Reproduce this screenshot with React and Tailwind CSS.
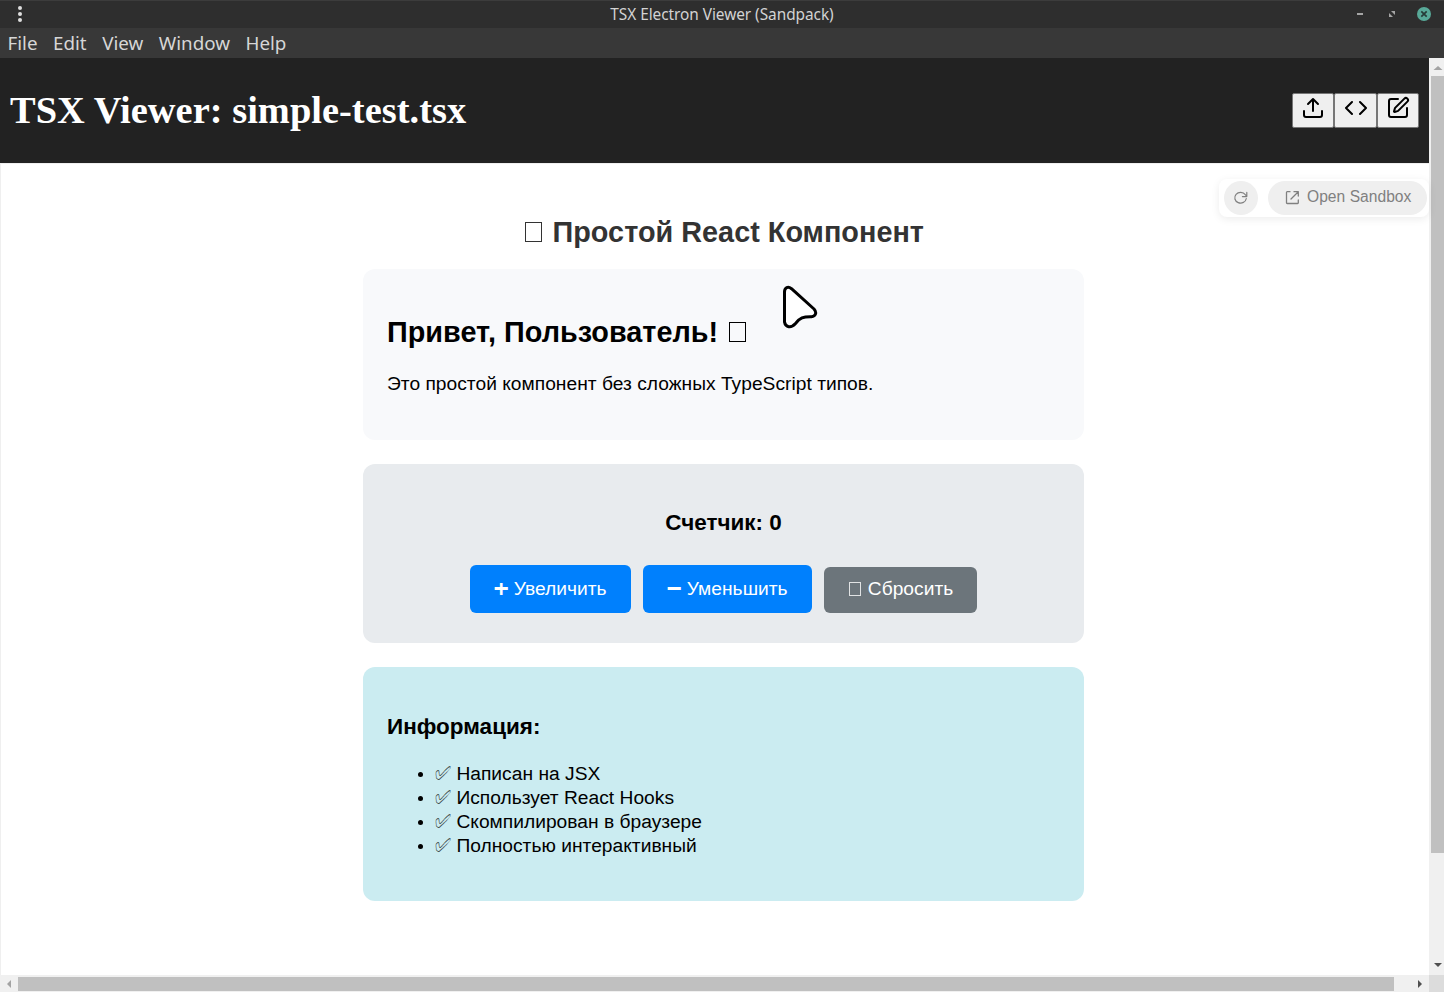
import React from "react";

const menus = ["File", "Edit", "View", "Window", "Help"];
const facts = ["Написан на JSX", "Использует React Hooks", "Скомпилирован в браузере", "Полностью интерактивный"];

function TitleBar() {
  return (
    <div className="flex h-[28px] items-center justify-between border-t border-[#3c3c3c] bg-[#2e2e2e]">
      <div className="flex w-[100px] flex-col items-start gap-[2px] pl-[18px] pb-[2px]">
        <i className="size-[4px] rounded-full bg-[#dedede]" />
        <i className="size-[4px] rounded-full bg-[#dedede]" />
        <i className="size-[4px] rounded-full bg-[#dedede]" />
      </div>
      <div className="flex w-[224px] justify-center whitespace-nowrap font-['Noto_Sans',sans-serif] text-[15.4px] leading-[20px] tracking-[-0.05px] text-[#d3d3d3]">
        TSX Electron Viewer (Sandpack)
      </div>
      <div className="flex w-[100px] items-center justify-end pr-[13px] pb-[1px]">
        <svg width="74" height="14" viewBox="0 0 74 14">
          <rect x="0" y="6" width="6" height="2" fill="#a5a5a5" />
          <path d="M34 4h4v4zM32 6v4h4z" fill="#a5a5a5" />
          <circle cx="67" cy="7" r="7" fill="#58a998" />
          <path d="M64.300 4.300l5.400 5.400M69.700 4.300l-5.400 5.400" stroke="#263c38" strokeWidth="1.7" />
        </svg>
      </div>
    </div>
  );
}

function MenuBar() {
  return (
    <div className="flex h-[30px] items-center gap-[15.500px] bg-[#383838] pl-[7.500px] font-['Noto_Sans',sans-serif] text-[18.800px] leading-[30px] text-[#d6d6d6]">
      {menus.map((m) => (
        <span key={m}>{m}</span>
      ))}
    </div>
  );
}

function ToolButton({ children }) {
  return (
    <button className="flex h-[35px] w-[42.500px] justify-center rounded-[2px] border border-[#767676] bg-[#efefef] pt-[2px] text-black">
      <svg width="24" height="24" viewBox="0 0 24 24" fill="none" stroke="currentColor" strokeWidth="2" strokeLinecap="round" strokeLinejoin="round">
        {children}
      </svg>
    </button>
  );
}

function Header() {
  return (
    <header className="flex h-[105px] shrink-0 items-center justify-between bg-[#222222] pl-[10px] pr-[10px]">
      <h1 className="whitespace-nowrap pb-[2px] font-['Liberation_Serif',serif] text-[38.400px] font-bold leading-[44px] tracking-[0.035px] text-white">
        TSX Viewer: simple-test.tsx
      </h1>
      <div className="flex">
        <ToolButton>
          <path d="M21 15v4a2 2 0 0 1-2 2H5a2 2 0 0 1-2-2v-4" />
          <path d="M17 8l-5-5-5 5M12 3v12" />
        </ToolButton>
        <ToolButton>
          <path d="M17 18l6-6-6-6M9 6l-6 6 6 6" />
        </ToolButton>
        <ToolButton>
          <path d="M12 3H5a2 2 0 0 0-2 2v14a2 2 0 0 0 2 2h14a2 2 0 0 0 2-2v-7" />
          <path d="M18.375 2.625a1 1 0 0 1 3 3l-9.013 9.014a2 2 0 0 1-.853.505l-2.873.84a.5.5 0 0 1-.62-.62l.84-2.873a2 2 0 0 1 .506-.852z" />
        </ToolButton>
      </div>
    </header>
  );
}

function Tofu({ className }) {
  return <span className={"inline-block border border-current align-baseline " + className} />;
}

function SandboxControls() {
  return (
    <div className="absolute right-0 top-[15px] flex h-[38px] w-[210px] items-center gap-[10px] rounded-[8px] bg-white pl-[5px] text-[#808080] shadow-[0_2px_8px_rgba(0,0,0,0.08)]">
      <div className="flex size-[34px] items-center justify-center rounded-full bg-[#efefef]">
        <svg width="16" height="16" viewBox="0 0 16 16" fill="none" stroke="currentColor" strokeWidth="1.200" strokeLinecap="round" strokeLinejoin="round">
          <path d="M13.300 8.500A5.800 5.300 0 1 1 12.300 4.700L13.800 6.400M13.800 2.400v4.200h-4.400" />
        </svg>
      </div>
      <div className="flex h-[34px] w-[158.500px] items-center rounded-full bg-[#efefef] pl-[17px]">
        <svg className="mb-[1px]" width="15" height="15" viewBox="0 0 15 15" fill="none" stroke="currentColor" strokeWidth="1.300" strokeLinecap="round" strokeLinejoin="round">
          <path d="M5 1.700H2.200a.7.7 0 0 0-.7.7V12.800a.7.7 0 0 0 .7.7H12.600a.7.7 0 0 0 .7-.7V10M9 1.700h4.300V6M13.300 1.700L6 9" />
        </svg>
        <span className="ml-[7px] whitespace-nowrap pb-[2px] text-[15.600px] leading-[20px] tracking-[0.03px]">Open Sandbox</span>
      </div>
    </div>
  );
}

function Pointer() {
  return (
    <svg className="absolute left-[780px] top-[121px]" width="38" height="46" viewBox="0 0 38 46">
      <path d="M3.500 7C3.500 2.500 7 1 10.500 3.700L33 24C36.200 27.500 34.500 31.500 30.500 31.700C22 31.500 19 33 14.500 38.500C10 43.500 4.500 42.500 3.500 37Z" fill="#fff" stroke="#000" strokeWidth="3" strokeLinejoin="round" />
    </svg>
  );
}

function Preview() {
  return (
    <main className="relative flex-1 border-l border-t border-[#efefef] bg-white font-['Liberation_Sans',sans-serif] text-[19.200px] tracking-[0.02px] text-black">
      <div className="ml-[362px] flex w-[721px] flex-col pt-[51px]">
        <h1 className="mb-[20px] whitespace-nowrap text-center text-[28.800px] font-bold leading-[34px] text-[#333333]">
          <Tofu className="ml-[2px] mr-[10.500px] h-[20px] w-[17px]" />
          Простой React Компонент
        </h1>
        <section className="h-[171px] rounded-[12px] bg-[#f8f9fb] px-[24px] pt-[46px]">
          <h2 className="whitespace-nowrap text-[28.800px] font-bold leading-[34px]">
            Привет, Пользователь! <Tofu className="ml-[2.500px] h-[20px] w-[17px]" />
          </h2>
          <p className="mt-[23px] leading-[24px]">Это простой компонент без сложных TypeScript типов.</p>
        </section>
        <section className="mt-[24px] h-[179px] rounded-[12px] bg-[#e8ebee] pt-[45px]">
          <h3 className="text-center text-[22.460px] font-bold leading-[28px]">Счетчик: 0</h3>
          <div className="mt-[28px] flex items-end justify-center gap-[12px] whitespace-nowrap leading-[24px] text-white">
            <button className="h-[48px] w-[161px] rounded-[6px] bg-[#0080fd]">
              <span className="font-['DejaVu_Sans'] text-[18.500px]">➕︎</span> Увеличить
            </button>
            <button className="h-[48px] w-[169px] rounded-[6px] bg-[#0080fd]">
              <span className="font-['DejaVu_Sans'] text-[18.500px]">➖︎</span> Уменьшить
            </button>
            <button className="h-[46px] w-[153px] rounded-[6px] bg-[#6c757b] pb-[2px]">
              <Tofu className="ml-px mr-[7px] h-[14px] w-[12px] translate-y-px opacity-80" />
              Сбросить
            </button>
          </div>
        </section>
        <section className="mt-[24px] h-[234px] rounded-[12px] bg-[#cbecf1] px-[24px] pt-[46px]">
          <h3 className="text-[22.460px] font-bold leading-[28px]">Информация:</h3>
          <ul className="mt-[21px] list-disc pl-[48px] marker:text-[17px]">
            {facts.map((f) => (
              <li key={f} className="h-[24px] leading-[24px]">
                <span className="font-['DejaVu_Sans'] text-black/70">✅︎</span> {f}
              </li>
            ))}
          </ul>
        </section>
      </div>
      <Pointer />
      <SandboxControls />
    </main>
  );
}

export default function App() {
  return (
    <div className="flex h-[992px] w-[1444px] flex-col overflow-hidden bg-white">
      <TitleBar />
      <MenuBar />
      <div className="flex h-[917px]">
        <div className="flex w-[1429px] flex-col">
          <Header />
          <Preview />
        </div>
        <div className="flex w-[15px] flex-col items-end bg-[#f0f0f0]">
          <svg width="13" height="18" viewBox="0 0 13 18">
            <path d="M2.500 12L7 8l4.500 4z" fill="#a3a3a3" />
          </svg>
          <div className="h-[777px] w-[13px] bg-[#c0c0c0]" />
          <svg className="mt-auto" width="13" height="18" viewBox="0 0 13 18">
            <path d="M3 6h8L7 10z" fill="#505050" />
          </svg>
        </div>
      </div>
      <div className="flex h-[17px] bg-[#f0f0f0]">
        <svg width="18" height="17" viewBox="0 0 18 17">
          <path d="M11 5v8L7 9z" fill="#a3a3a3" />
        </svg>
        <div className="mt-[2px] h-[14px] w-[1376px] bg-[#c0c0c0]" />
        <svg className="ml-auto" width="35" height="17" viewBox="0 0 35 17">
          <path d="M24 5v8l4-4z" fill="#505050" />
        </svg>
        <div className="h-[17px] w-[15px] bg-[#dcdcdc]" />
      </div>
    </div>
  );
}
